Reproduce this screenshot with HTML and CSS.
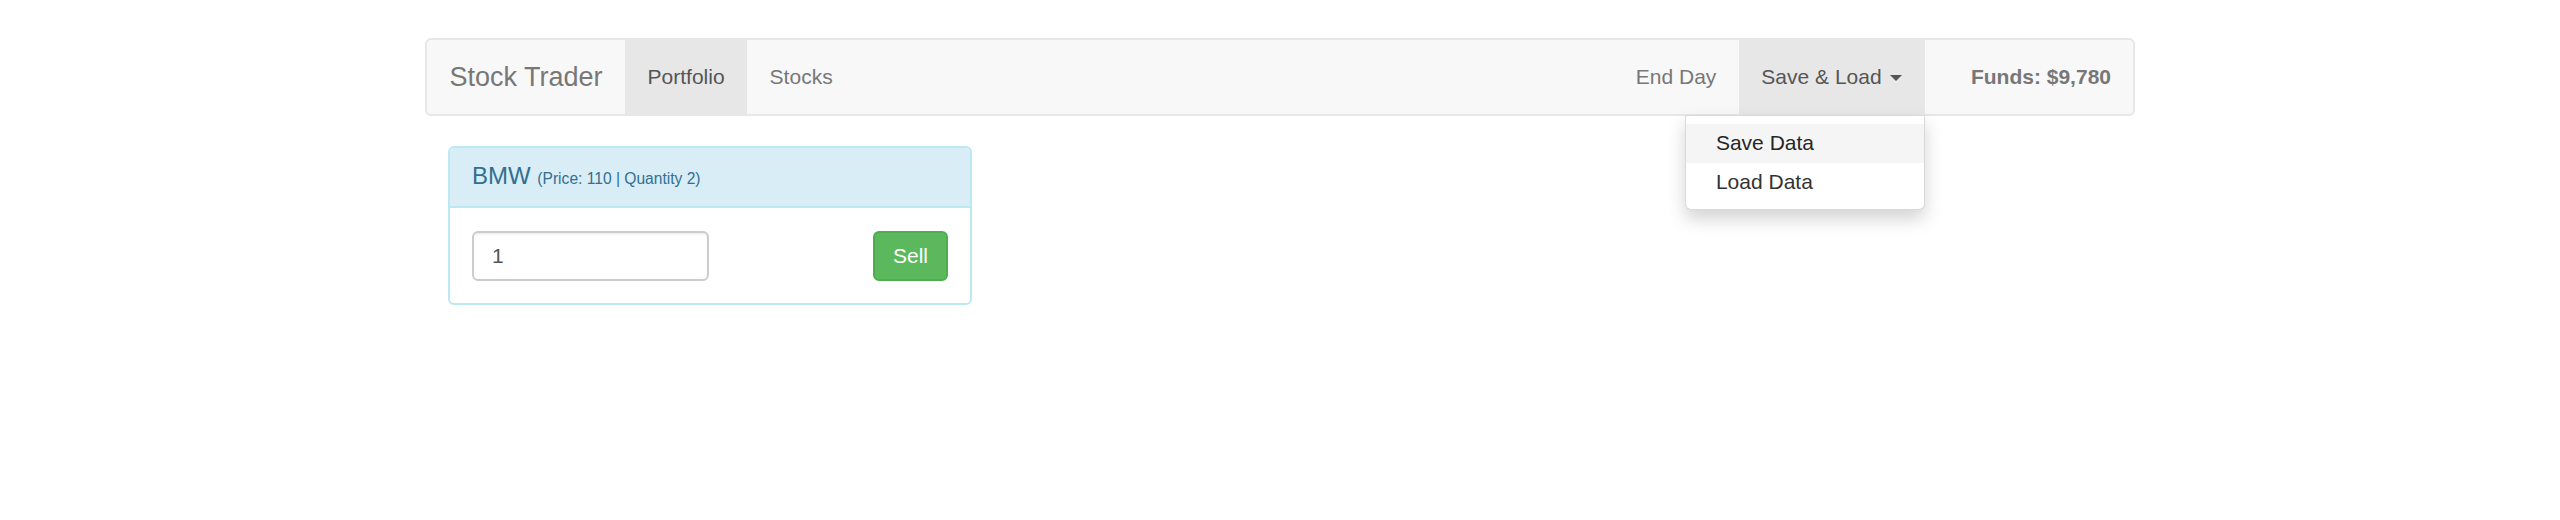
FILE: index.html
```html
<!DOCTYPE html>
<html lang="en">
<head>
<meta charset="utf-8">
<title>Stock Trader</title>
<link rel="stylesheet" href="styles.css">
</head>
<body>
<div class="container">
  <nav class="navbar">
    <a class="brand" href="#">Stock Trader</a>
    <ul class="nav">
      <li class="active"><a href="#">Portfolio</a></li>
      <li><a href="#">Stocks</a></li>
    </ul>
    <div class="spacer"></div>
    <ul class="nav">
      <li><a href="#">End Day</a></li>
      <li class="dropdown open">
        <a href="#">Save &amp; Load <span class="caret"></span></a>
        <ul class="dropdown-menu">
          <li class="hover"><a href="#">Save Data</a></li>
          <li><a href="#">Load Data</a></li>
        </ul>
      </li>
    </ul>
    <p class="navbar-text">Funds: $9,780</p>
  </nav>
  <div class="row">
    <div class="panel">
      <div class="panel-heading">
        <h3 class="panel-title">BMW <small>(Price: 110 | Quantity 2)</small></h3>
      </div>
      <div class="panel-body">
        <input class="form-control" type="number" value="1">
        <button class="btn-success">Sell</button>
      </div>
    </div>
  </div>
</div>
</body>
</html>
```
FILE: styles.css
```css
* { box-sizing: border-box; }
html, body { margin: 0; padding: 0; background: #fff; }
body {
  font-family: "Liberation Sans", Arial, Helvetica, sans-serif;
  font-size: 21px;
  line-height: 30px;
  color: #333;
}
.container {
  width: 1710px;
  margin: 0 auto;
  padding-top: 38px;
}
.navbar {
  display: flex;
  align-items: stretch;
  height: 78px;
  background: #f8f8f8;
  border: 2px solid #e7e7e7;
  border-radius: 6px;
  margin-bottom: 30px;
}
.brand {
  display: block;
  padding: 22px 22.5px;
  font-size: 27px;
  line-height: 30px;
  color: #777;
  text-decoration: none;
}
.nav {
  display: flex;
  list-style: none;
  margin: 0;
  padding: 0;
}
.nav > li { position: relative; }
.nav > li > a {
  display: block;
  padding: 22px 22.5px;
  line-height: 30px;
  color: #777;
  text-decoration: none;
}
.nav > li.active > a,
.nav > li.open > a {
  background: #e7e7e7;
  color: #555;
}
.spacer { flex: 1; }
.caret {
  display: inline-block;
  width: 0;
  height: 0;
  margin-left: 3px;
  vertical-align: middle;
  border-top: 6px solid;
  border-left: 6px solid transparent;
  border-right: 6px solid transparent;
}
.dropdown-menu {
  position: absolute;
  top: calc(100% + 1px);
  right: 0;
  z-index: 10;
  min-width: 240px;
  margin: 0;
  padding: 7.5px 0;
  list-style: none;
  background: #fff;
  border: 1.5px solid rgba(0, 0, 0, .15);
  border-radius: 0 0 6px 6px;
  box-shadow: 0 9px 18px rgba(0, 0, 0, .175);
}
.dropdown-menu > li > a {
  display: block;
  padding: 4.5px 30px;
  line-height: 30px;
  color: #333;
  text-decoration: none;
  white-space: nowrap;
}
.dropdown-menu > li.hover > a { background: #f5f5f5; color: #262626; }
.navbar-text {
  margin: 22px 22px 0 46px;
  line-height: 30px;
  font-weight: bold;
  color: #777;
}
.row { padding: 0 23px; }
.panel {
  width: 524px;
  background: #fff;
  border: 2px solid #bce8f1;
  border-radius: 6px;
}
.panel-heading {
  padding: 15px 22px;
  background: #d9edf7;
  color: #31708f;
  border-bottom: 2px solid #bce8f1;
  border-radius: 4px 4px 0 0;
}
.panel-title {
  margin: 0;
  font-size: 24px;
  line-height: 25px;
  font-weight: normal;
  color: #31708f;
}
.panel-title small {
  font-size: 15.6px;
  color: #31708f;
}
.panel-body {
  display: flex;
  justify-content: space-between;
  align-items: center;
  padding: 23px 22px 22px;
}
.form-control {
  width: 237px;
  height: 50px;
  padding: 0 18px;
  font-family: inherit;
  font-size: 21px;
  color: #555;
  background: #fff;
  border: 2px solid #ccc;
  border-radius: 6px;
  box-shadow: inset 0 1.5px 1.5px rgba(0, 0, 0, .075);
  outline: none;
  -moz-appearance: textfield;
}
.form-control::-webkit-inner-spin-button,
.form-control::-webkit-outer-spin-button { -webkit-appearance: none; margin: 0; }
.btn-success {
  height: 50px;
  padding: 0 18px;
  font-family: inherit;
  font-size: 21px;
  line-height: 30px;
  color: #fff;
  background: #5cb85c;
  border: 2px solid #4cae4c;
  border-radius: 6px;
  cursor: pointer;
}
```
